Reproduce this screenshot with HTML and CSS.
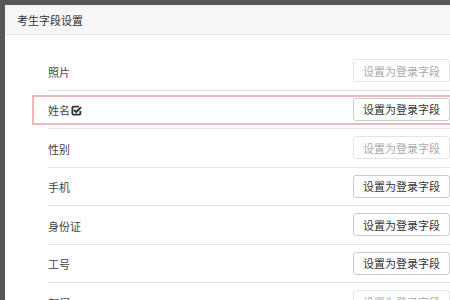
FILE: index.html
```html
<!DOCTYPE html>
<html>
	<head>
		<meta charset="UTF-8">
		<title>考生字段设置</title>
		<link rel="stylesheet" href="styles.css">
	</head>
	<body>
		<div class="modal">
			<div class="modal-hd">考生字段设置</div>
			<ul class="field-list">
				<li><span class="name">照片</span><button class="btn" disabled>设置为登录字段</button></li>
				<li class="mark"><span class="name">姓名<svg class="ico" viewBox="0 0 12 12"><path d="M8.5 1.8H2.6Q1.5 1.8 1.5 2.9V9.4Q1.5 10.5 2.6 10.5H9.1Q10.2 10.5 10.2 9.4V6.6" fill="none" stroke="#333" stroke-width="2"/><path d="M3.4 5.4L5.7 7.6L11 2.3" fill="none" stroke="#333" stroke-width="2.2"/></svg></span><button class="btn">设置为登录字段</button></li>
				<li><span class="name">性别</span><button class="btn" disabled>设置为登录字段</button></li>
				<li><span class="name">手机</span><button class="btn">设置为登录字段</button></li>
				<li><span class="name">身份证</span><button class="btn">设置为登录字段</button></li>
				<li><span class="name">工号</span><button class="btn">设置为登录字段</button></li>
				<li><span class="name">部门</span><button class="btn" disabled>设置为登录字段</button></li>
			</ul>
		</div>
	</body>
</html>
```

FILE: styles.css
```css
*{margin: 0;padding: 0;}
body{background: #565656;overflow: hidden;padding: 5px 0 0 5px;font-family: "Noto Sans CJK SC", sans-serif;}
.modal{width: 520px;height: 400px;background: #fff;}
.modal-hd{height: 29px;line-height: 30px;padding-left: 12px;font-size: 11px;color: #333;background: #f6f6f6;border-bottom: 1px solid #e6e6e6;}
.field-list{list-style: none;width: 402px;margin: 17px 0 0 43px;}
.field-list li{height: 37.5px;display: flex;align-items: center;justify-content: space-between;border-bottom: 1px solid #e2e2e2;position: relative;}
.name{font-size: 11px;color: #444;display: flex;align-items: center;margin-top: 2px;}
.ico{width: 11px;height: 11px;margin-left: 1px;}
.btn{width: 97px;height: 23px;border: 1px solid #ccc;border-radius: 3px;background: #fff;font-family: inherit;font-size: 11px;color: #333;}
.btn:disabled{border-color: #e4e4e4;color: #aaa;}
.mark::before{content: "";position: absolute;left: -16px;right: -40px;top: 4px;bottom: 3px;border: 2px solid #eeb8b8;}
```
